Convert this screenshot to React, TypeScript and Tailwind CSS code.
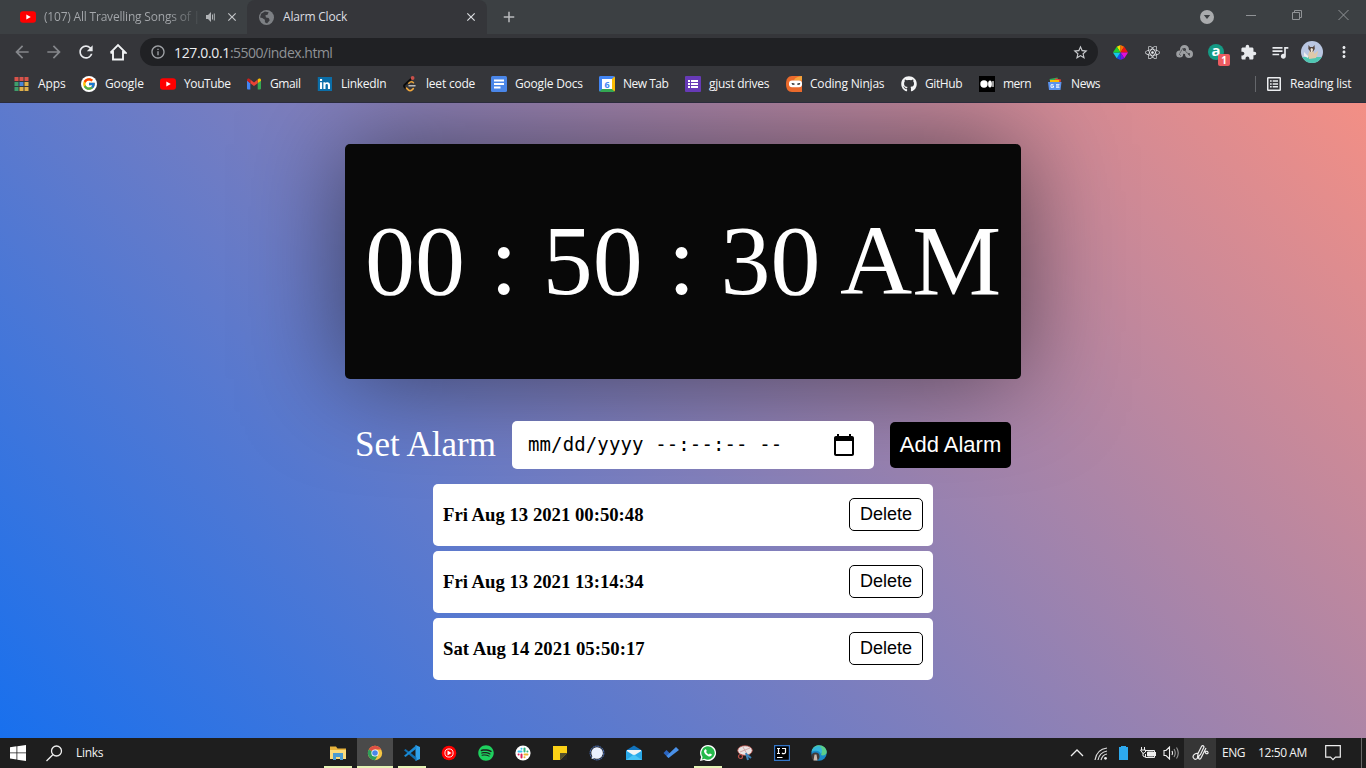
import type { ReactNode } from "react";
import { FcGoogle } from "react-icons/fc";
import { FaGithub, FaReact, FaSpotify } from "react-icons/fa";
import { MdExtension, MdQueueMusic, MdStarBorder, MdMoreVert, MdInfoOutline, MdRefresh, MdArrowBack, MdArrowForward, MdClose, MdAdd } from "react-icons/md";

function YouTube() {
  return (
    <svg width="16" height="16" viewBox="0 0 16 16">
      <rect x="0" y="2.2" width="16" height="11.6" rx="3" fill="#f00" />
      <path d="M6.3 5.4v5.2L10.8 8z" fill="#fff" />
    </svg>
  );
}

function Apps() {
  const colors = ["#d9534a", "#d9534a", "#d9534a", "#3f9d6c", "#4a86d8", "#e0b04a", "#3f9d6c", "#e0b04a", "#e0b04a"];
  return (
    <svg width="16" height="16" viewBox="0 0 16 16">
      {colors.map((c, i) => (
        <rect key={i} x={0.5 + (i % 3) * 5} y={1 + Math.floor(i / 3) * 5} width="4" height="4" fill={c} />
      ))}
    </svg>
  );
}

function GoogleBadge() {
  return (
    <span className="flex size-4 items-center justify-center rounded-full bg-white">
      <FcGoogle size={14} />
    </span>
  );
}

function Gmail() {
  return (
    <svg width="16" height="16" viewBox="0 0 16 16">
      <path d="M1 4v8.500c0 .5.4.9.9.9H4.300V7.200z" fill="#4285f4" />
      <path d="M15 4v8.500c0 .5-.4.9-.9.9h-2.400V7.200z" fill="#34a853" />
      <path d="M11.700 3.600v3.700L15 4.800V4c0-1.300-1.400-2-2.400-1.200z" fill="#fbbc04" />
      <path d="M4.300 7.300V3.600L8 6.400l3.700-2.800v3.700L8 10.100z" fill="#ea4335" />
      <path d="M1 4v.8l3.300 2.500V3.600l-.9-.8C2.400 2 1 2.700 1 4z" fill="#c5221f" />
    </svg>
  );
}

function LinkedIn() {
  return (
    <svg width="16" height="16" viewBox="0 0 16 16">
      <rect x="0.800" y="1" width="14.200" height="14" fill="#0b6ea8" />
      <path d="M3 6.300h2.100V13H3zM3 3h2.100v2H3zM6.400 6.300h2v1c1-1.700 4.600-1.600 4.600 1.700v4h-2.100V9.500c0-2-2.400-1.800-2.400 0V13H6.400z" fill="#fff" />
    </svg>
  );
}

function Leet() {
  return (
    <svg width="16" height="16" viewBox="0 0 16 16" fill="none" strokeLinecap="round">
      <path d="M9.500 2.500 2.500 9c-.7.7-.7 1.500 0 2.200l1.200 1.200" stroke="#0c0c0c" strokeWidth="1.800" />
      <path d="M11.500 6.700C9.800 5.200 8.400 5.600 6.800 7.200" stroke="#e9a33b" strokeWidth="1.500" />
      <path d="m4.500 12.200 1.800 1.700c1 1 2.700 1 3.700 0l1.300-1.300" stroke="#f0a63c" strokeWidth="1.700" />
      <path d="M7 9.700h6" stroke="#bbb" strokeWidth="1.500" />
      <circle cx="10.600" cy="2" r="1.900" fill="#c9504a" />
    </svg>
  );
}

function Docs() {
  return (
    <svg width="16" height="16" viewBox="0 0 16 16">
      <rect width="16" height="16" rx="1.500" fill="#4a86e8" />
      <path d="M3 3.500h10v2H3zM3 7h10v2H3zM3 10.500h6.500v2H3z" fill="#fff" />
    </svg>
  );
}

function Calendar() {
  return (
    <span className="flex size-4 items-center justify-center overflow-hidden rounded-[2px] border-[3px] border-t-[#4285f4] border-r-[#fbbc04] border-b-[#34a853] border-l-[#4285f4] bg-white text-[9px] leading-none font-bold text-[#4285f4]">
      6
    </span>
  );
}

function Forms() {
  return (
    <svg width="16" height="16" viewBox="0 0 16 16">
      <rect width="16" height="16" rx="1" fill="#673ab7" />
      <path d="M3 4h2v2H3zM6 4h7v2H6zM3 7h2v2H3zM6 7h7v2H6zM3 10h2v2H3zM6 10h7v2H6z" fill="#fff" />
    </svg>
  );
}

function Ninjas() {
  return (
    <svg width="16" height="16" viewBox="0 0 16 16">
      <path d="M6 0h10v16H6C2 16 0 13 0 8s2-8 6-8z" fill="#ea6a2c" />
      <path d="M16 0v4.500H8C8.500 2 12 .5 16 0z" fill="#f5a43c" />
      <rect x="3" y="4.500" width="13" height="6.800" rx="3" fill="#fff" />
      <path d="m5.500 7 3 .6v1.200H6.300zM14.300 7l-3 .6v1.200h2.200z" fill="#222" />
    </svg>
  );
}

function Medium() {
  return (
    <svg width="16" height="16" viewBox="0 0 16 16">
      <rect width="16" height="16" fill="#000" />
      <circle cx="5" cy="8" r="3.700" fill="#fff" />
      <ellipse cx="11" cy="8" rx="1.900" ry="3.500" fill="#fff" />
      <rect x="13.400" y="5" width="1.200" height="6" rx=".6" fill="#fff" />
    </svg>
  );
}

function News() {
  return (
    <svg width="16" height="16" viewBox="0 0 16 16">
      <path d="m2.500 3 8-1.500 1 4-8 2z" fill="#34a853" />
      <path d="m8 2.500 6 1-1 5-5-1z" fill="#ea4335" />
      <path d="M3 4h9v4H3z" fill="#fbbc04" />
      <path d="M1 6h13.500l-1 8H2z" fill="#5b93ee" />
      <path d="M6.500 8.700H4v2.600h2.500V10H5.400M9 8.700h3.500M9 10h3M9 11.300h3.500" stroke="#fff" fill="none" strokeWidth=".9" />
    </svg>
  );
}

const bookmarks: { label: string; icon: ReactNode; box: string; text: string }[] = [
  { label: "Apps", icon: <Apps />, box: "w-[67px]", text: "tracking-[-0.1px]" },
  { label: "Google", icon: <GoogleBadge />, box: "w-[79px]", text: "tracking-[-0.1px]" },
  { label: "YouTube", icon: <YouTube />, box: "w-[86px]", text: "tracking-[-0.4px]" },
  { label: "Gmail", icon: <Gmail />, box: "w-[71px]", text: "tracking-[-0.4px]" },
  { label: "LinkedIn", icon: <LinkedIn />, box: "w-[85px]", text: "tracking-[-0.3px]" },
  { label: "leet code", icon: <Leet />, box: "w-[89px]", text: "tracking-[-0.2px]" },
  { label: "Google Docs", icon: <Docs />, box: "w-[108px]", text: "tracking-[-0.2px]" },
  { label: "New Tab", icon: <Calendar />, box: "w-[86px]", text: "tracking-[-0.5px]" },
  { label: "gjust drives", icon: <Forms />, box: "w-[101px]", text: "tracking-[-0.3px]" },
  { label: "Coding Ninjas", icon: <Ninjas />, box: "w-[115px]", text: "tracking-[-0.2px]" },
  { label: "GitHub", icon: <FaGithub size={16} />, box: "w-[78px]", text: "tracking-[-0.4px]" },
  { label: "mern", icon: <Medium />, box: "w-[68px]", text: "tracking-[-0.5px]" },
  { label: "News", icon: <News />, box: "w-[60px]", text: "tracking-[-0.4px]" },
];

function TabStrip() {
  return (
    <div className="flex h-[34px] bg-[#3c4043] text-[12px]">
      <div className="flex w-[247px] shrink-0 items-center pl-5 text-[#a5a8ac]">
        <YouTube />
        <span className="ml-2 w-[155px] shrink-0 bg-gradient-to-r from-[#a5a8ac] from-80% to-[#4b4f52] bg-clip-text tracking-[-0.2px] whitespace-nowrap text-transparent">
          (107) All Travelling Songs of |
        </span>
        <svg className="ml-[6px] shrink-0" width="12" height="12" viewBox="0 0 12 12">
          <path d="M1 4h2l3-3v10L3 8H1z" fill="#b0b3b6" />
          <path d="M7.500 3.500v5M9.300 2.500v7" stroke="#b0b3b6" strokeWidth="1" />
        </svg>
        <MdClose className="ml-2 shrink-0 text-[#c4c6c9]" size={14} />
      </div>
      <div className="flex w-[240px] shrink-0 items-center rounded-t-lg bg-[#35363a] pl-3 text-[#dcdee1]">
        <svg width="15" height="15" viewBox="0 0 14 14">
          <circle cx="7" cy="7" r="7" fill="#7d8084" />
          <path d="M2 3.500 5.500 1.500 9 2 8 4.500 6 5l.5 2L9 7.500l1 2-2.500 3-2-1V9L3 7.500 1 7z" fill="#393a3e" />
        </svg>
        <span className="ml-[9px] w-[181px] tracking-[-0.2px]">Alarm Clock</span>
        <MdClose size={14} />
      </div>
      <div className="flex flex-1 items-center pl-[13px] text-[#b9bbbe]">
        <MdAdd size={18} />
        <div className="ml-auto mr-8 flex size-[14px] items-center justify-center rounded-full bg-[#a9abad]">
          <svg width="8" height="6" viewBox="0 0 8 6"><path d="M.8 1h6.400L4 5z" fill="#3c4043" /></svg>
        </div>
        <svg className="mr-[16px] mb-[5px]" width="104" height="12" viewBox="0 0 104 12" fill="none" stroke="#909396">
          <path d="M0 6.500h10" />
          <path d="M46.500 3.500h7v7h-7zM48.500 3V1.500h7v7H54" />
          <path d="m92.500 1 10 10m0-10-10 10" />
        </svg>
      </div>
    </div>
  );
}

const cell = "flex w-8 shrink-0 items-center justify-center";

function Toolbar() {
  return (
    <div className="flex h-9 items-center bg-[#35363a] text-[#e8eaed]">
      <div className="flex items-center pl-3">
        <MdArrowBack size={20} className="text-[#85878b]" />
        <MdArrowForward size={20} className="ml-3 text-[#85878b]" />
        <MdRefresh size={20} className="ml-3" />
        <svg className="ml-[13px]" width="18" height="18" viewBox="0 0 18 18" fill="none" stroke="#f1f3f4" strokeWidth="1.900">
          <path d="M4 8v8.500h10V8M1.500 9.700 9 2.200l7.500 7.500H14M4 9.700H1.500" />
        </svg>
      </div>
      <div className="ml-[13px] flex h-7 w-[958px] shrink-0 items-center rounded-full bg-[#202124] pl-[10px]">
        <MdInfoOutline size={16} className="text-[#a0a3a7]" />
        <span className="ml-2 text-[14px] tracking-[-0.5px] text-[#8f9296]">
          <span className="tracking-[-0.35px] text-[#eceef0]">127.0.0.1</span>:5500/index.html
        </span>
        <MdStarBorder size={17} className="mr-[9px] ml-auto text-[#c9cbce]" />
      </div>
      <div className="flex flex-1 items-center pl-[6px]">
        <span className={cell}>
          <svg width="17" height="17" viewBox="0 0 18 18">
            <path d="M9 9 5 3l4-2z" fill="#f0e000" /><path d="M9 9V1l4 2z" fill="#ff6b00" />
            <path d="m9 9 4-6 4 6z" fill="#f01414" /><path d="m9 9 8 0-4 6z" fill="#e010d8" />
            <path d="m9 9 4 6-4 2z" fill="#7014e8" /><path d="m9 9-4 6 4 2z" fill="#1450f0" />
            <path d="m9 9-8 0 4 6z" fill="#14c8e8" /><path d="M9 9H1l4-6z" fill="#20d030" />
          </svg>
        </span>
        <span className={cell}><FaReact size={15} /></span>
        <span className={cell}>
          <svg width="17" height="16" viewBox="0 0 17 16" fill="none" stroke="#9c9ea1">
            <g strokeWidth="3"><circle cx="8.500" cy="5.500" r="3" /><circle cx="3.700" cy="10" r="2" /><circle cx="13" cy="10" r="2.500" /></g>
            <path d="m4 9 3-5 4 5 3 1M3 10l2 2M12 10l2 2" stroke="#55575b" strokeWidth=".8" />
          </svg>
        </span>
        <span className={cell}>
          <span className="relative flex size-4 items-center justify-center rounded-full bg-[#159a84] text-[15px] leading-none font-bold text-white">
            <span className="-mt-[3px]">a</span>
            <span className="absolute top-[10px] left-[10px] flex h-3 w-3 items-center justify-center rounded-[2px] bg-[#ed5b60] text-[10px] leading-none">1</span>
          </span>
        </span>
        <span className={cell}><MdExtension size={17} /></span>
        <span className={cell}><MdQueueMusic size={20} /></span>
        <span className={cell}>
          <svg width="22" height="22" viewBox="0 0 22 22">
            <defs><clipPath id="avatar"><circle cx="11" cy="11" r="11" /></clipPath></defs>
            <g clipPath="url(#avatar)">
              <path d="M0 0h22v22H0z" fill="#bac7e2" />
              <path d="M0 16h22v6H0z" fill="#4fc7b2" />
              <path d="M8.500 10h4l1 3 3-3 .5 1-2 6-7 1-1-4z" fill="#dec9aa" />
              <path d="m7.500 4 1.500 2h3l1.500-2 .3 4-2 3h-2L7.300 8z" fill="#54463f" />
              <path d="m9.500 8 1.200-1L12 8l-.5 3h-1.400z" fill="#efe5d7" />
              <path d="m3 11 4 4v2l-4-2z" fill="#eee" />
            </g>
          </svg>
        </span>
        <span className={cell}><MdMoreVert size={18} /></span>
      </div>
    </div>
  );
}

function BookmarksBar() {
  return (
    <div className="flex h-[33px] items-center border-b border-[#2b2c3c] bg-[#35363a] pb-[4px] pl-[14px] text-[12px] text-[#f4f5f6]">
      {bookmarks.map((b) => (
        <div key={b.label} className={`flex shrink-0 items-center gap-2 whitespace-nowrap ${b.box}`}>
          <span className="flex size-4 shrink-0 items-center justify-center">{b.icon}</span>
          <span className={b.text}>{b.label}</span>
        </div>
      ))}
      <div className="mr-[14px] ml-auto flex items-center">
        <div className="h-4 w-px bg-[#65676b]" />
        <svg className="ml-[11px]" width="14" height="14" viewBox="0 0 14 14">
          <rect x=".75" y=".75" width="12.500" height="12.500" rx=".5" fill="none" stroke="#eceef0" strokeWidth="1.500" />
          <path d="M3 3.300h1.700v1.500H3zM3 6.200h1.700v1.500H3zM3 9.100h1.700v1.500H3zM5.700 3.300H11v1.500H5.700zM5.700 6.200H11v1.500H5.700zM5.700 9.100H11v1.500H5.700z" fill="#eceef0" />
        </svg>
        <span className="ml-[9px] w-[62px] tracking-[-0.25px] whitespace-nowrap">Reading list</span>
      </div>
    </div>
  );
}

const alarms = ["Fri Aug 13 2021 00:50:48", "Fri Aug 13 2021 13:14:34", "Sat Aug 14 2021 05:50:17"];

function AlarmPage() {
  return (
    <main className="flex h-[635px] flex-col items-center overflow-hidden bg-[linear-gradient(45deg,#1870ee,#f38f85)] pt-[41px] font-['Liberation_Serif',serif]">
      <div className="flex h-[235px] w-[676px] items-center justify-center rounded-[5px] bg-[#080808] text-[100px] leading-[115px] whitespace-nowrap text-white shadow-[0_0_100px_rgba(0,0,0,0.5)]">
        <span className="mb-[2px]">00 : 50 : 30 AM</span>
      </div>
      <div className="mt-[42px] flex h-12 w-[656px] items-center">
        <label className="mb-[2px] w-[157px] text-[35px] leading-none whitespace-nowrap text-white">Set Alarm</label>
        <div className="flex h-12 w-[362px] items-center rounded-[5px] bg-white pr-[18px] pl-4 text-black">
          <span className="mb-[2px] font-['DejaVu_Sans_Mono',monospace] text-[19px] tracking-[0.12px] whitespace-pre">mm/dd/yyyy --:--:-- --</span>
          <svg className="ml-auto" width="24" height="24" viewBox="0 0 24 24">
            <path d="M20 3h-1V1h-2v2H7V1H5v2H4c-1.100 0-2 .9-2 2v16c0 1.100.9 2 2 2h16c1.100 0 2-.9 2-2V5c0-1.100-.9-2-2-2zm0 18H4V8h16v13z" />
          </svg>
        </div>
        <button className="ml-4 h-[46px] w-[121px] rounded-[5px] bg-black pb-[2px] font-['Liberation_Sans',sans-serif] text-[22px] whitespace-nowrap text-white">Add Alarm</button>
      </div>
      <div className="mt-[15px] flex w-[500px] flex-col gap-[5px]">
        {alarms.map((a) => (
          <div key={a} className="flex h-[62px] items-center justify-between rounded-[5px] bg-white px-[10px] text-black">
            <h3 className="text-[18.72px] font-bold">{a}</h3>
            <button className="mb-[2px] h-[33px] w-[74px] rounded-[5px] border border-black font-['Liberation_Sans',sans-serif] text-[18px] leading-none">Delete</button>
          </div>
        ))}
      </div>
    </main>
  );
}

const taskIcons: { name: string; open?: boolean; active?: boolean; icon: ReactNode }[] = [
  {
    name: "files", open: true,
    icon: <><path d="M0 1.500h6l1.500 2H16V14H0z" fill="#e8b33c" /><path d="M0 5h16v9H0z" fill="#fbdb7a" /><path d="M3 8h10v7h-3v-3H6v3H3z" fill="#4b9bd0" /></>,
  },
  {
    name: "chrome", open: true, active: true,
    icon: <><circle cx="8" cy="8" r="7.200" fill="#f6c543" /><path d="M8 8 1.800 4.400a7.200 7.200 0 0 1 12.400 0H8z" fill="#dd5044" /><path d="M8 8 1.800 4.400A7.200 7.200 0 0 0 8 15.200l3.100-5.400z" fill="#2e9e5b" /><circle cx="8" cy="8" r="3.600" fill="#fff" /><circle cx="8" cy="8" r="2.800" fill="#4a86e8" /></>,
  },
  {
    name: "code", open: true,
    icon: <><path d="m11.500 0 4.500 2v12l-4.500 2z" fill="#2fa1ea" /><path d="M0 5.200 1.500 4 12.500 12.500V16z" fill="#1070b3" /><path d="M0 10.800 1.500 12 12.500 3.500V0z" fill="#1a8ad4" /></>,
  },
  {
    name: "music",
    icon: <><circle cx="8" cy="8" r="7.300" fill="#f00" /><circle cx="8" cy="8" r="4.100" fill="none" stroke="#fff" strokeWidth=".9" /><path d="m6.500 5.600 4 2.400-4 2.400z" fill="#fff" /></>,
  },
  { name: "spotify", icon: <FaSpotify size={16} color="#1ed05e" /> },
  {
    name: "slack",
    icon: <><circle cx="8" cy="8" r="7.600" fill="#fff" /><g fill="none" strokeWidth="2" strokeLinecap="round"><path d="M3.500 6.500h3" stroke="#36c5f0" /><path d="M9.500 3.500v3" stroke="#2eb67d" /><path d="M9.500 9.500h3" stroke="#ecb22e" /><path d="M6.500 9.500v3" stroke="#e01e5a" /></g><circle cx="6.500" cy="3.700" r="1" fill="#36c5f0" /><circle cx="12.400" cy="6.500" r="1" fill="#2eb67d" /><circle cx="9.500" cy="12.300" r="1" fill="#ecb22e" /><circle cx="3.600" cy="9.500" r="1" fill="#e01e5a" /></>,
  },
  { name: "notes", icon: <><path d="M1 1h14v14H1z" fill="#fcd116" /><path d="M8 8h7l-7 7z" fill="#55512d" /><path d="M15 8v7H8z" fill="#252525" /></> },
  { name: "signal", icon: <><circle cx="8" cy="8" r="6.900" fill="none" stroke="#5c8bea" strokeWidth=".8" strokeDasharray="2 .5" /><path d="M8 2.200a5.800 5.800 0 1 1-2.500 11L2.500 14l.8-2.800A5.800 5.800 0 0 1 8 2.200z" fill="#eaf1ff" /></> },
  { name: "mail", icon: <><path d="m0 5.500 8-5 8 5V15H0z" fill="#1273bd" /><path d="M1 5h14v5H1z" fill="#f1f4f5" /><path d="m0 5.500 8 5 8-5V15H0z" fill="#29a8e8" /><path d="m0 15 8-5.500 8 5.500z" fill="#47c3f5" /></> },
  { name: "todo", icon: <><path d="m.5 8 3-3L8.500 10l-3 3z" fill="#2b65c0" /><path d="m5.500 13-2-2 9.500-9 3 3z" fill="#4a91e8" /></> },
  {
    name: "whatsapp", open: true,
    icon: <><path d="M8 0a8 8 0 1 1-4 14.900L0 16l1.100-4A8 8 0 0 1 8 0z" fill="#fff" /><path d="M8 1.300a6.700 6.700 0 1 1-3.500 12.400l-2.600.7.700-2.500A6.700 6.700 0 0 1 8 1.300z" fill="#25b94a" /><path d="M5.300 4.300c.8-.5 1 .4 1.500 1.700l-.7 1c.7 1.300 1.600 2 2.800 2.500l.9-1c1 .4 2.200.7 2 1.200-.4 1.600-2 2-3.500 1.500-2.200-.8-4-2.700-4.300-4.600 0-1 .5-1.800 1.300-2.300z" fill="#fff" /></>,
  },
  { name: "snip", icon: <><ellipse cx="8" cy="5.500" rx="7.300" ry="4.800" fill="#e9e3e3" stroke="#b84c46" strokeWidth=".8" /><path d="m3 7 10-4M6 2l4 7" stroke="#c99" strokeWidth=".8" /><circle cx="3.500" cy="11.500" r="2" fill="none" stroke="#b84c46" strokeWidth="1.200" /><path d="m9 8 2 7M9 9l5 4" stroke="#3c82b8" strokeWidth="2" /></> },
  { name: "idea", icon: <><path d="M.6.6h14.800v14.800H.6z" fill="#000" stroke="#3476c8" strokeWidth="1.200" /><path d="M3 3.500h3M4.500 3.500v5M3 8.500h3M8 3.500h3.500v3.800c0 1.600-2.500 1.800-3.500.7M3 12.500h5.500" fill="none" stroke="#fff" strokeWidth="1.200" /></> },
  { name: "edge", icon: <><circle cx="8" cy="8" r="7.700" fill="#198ac9" /><path d="M.8 6C2 1.800 5 .2 8 .2c4.500 0 7.700 3.300 7.800 6.800 0 3-3.800 4-5.800 3 1.500-2.500-.5-5-4-5C3.500 5 1.800 5 .8 6z" fill="#5bcf8b" /><path d="M.5 7C1.500 3 4 1 8 1c3 1 4 5 2 8C9 6 5 4.500.5 7z" fill="#35b7dc" /><circle cx="4.500" cy="11.500" r="4" fill="#413b39" /><path d="M3.500 9.500h2l1 6h-4z" fill="#cabbb0" /></> },
];

function Taskbar() {
  return (
    <footer className="flex h-[30px] bg-[#1e1e1e] text-[12px] text-[#f2f2f2]">
      <div className="flex w-[319px] items-center pl-[10px]">
        <svg width="16" height="16" viewBox="0 0 16 16"><path d="M0 2.200 6.500 1.300v6.200H0zM7.300 1.200 16 0v7.500H7.300zM0 8.300h6.500v6.200L0 13.600zM7.300 8.300H16V16l-8.700-1.300z" fill="#fff" /></svg>
        <svg className="ml-5" width="17" height="17" viewBox="0 0 17 17" fill="none" stroke="#f0f0f0" strokeWidth="1.300"><circle cx="10.500" cy="6" r="5" /><path d="M6.800 9.700.5 16" /></svg>
        <span className="ml-[13px] tracking-[-0.3px]">Links</span>
      </div>
      {taskIcons.map((t) => (
        <div key={t.name} className="flex w-[37px] justify-center">
          <div className={`flex items-center justify-center border-b-2 ${t.active ? "w-9 bg-[#4a4a4a]" : "w-7"} ${t.open ? "border-[#e4f3b5]" : "border-transparent"}`}>
            <svg className="mt-[2px]" width="16" height="16" viewBox="0 0 16 16">{t.icon}</svg>
          </div>
        </div>
      ))}
      <div className="ml-auto flex items-center">
        <svg className="mr-[10px]" width="14" height="8" viewBox="0 0 14 8" fill="none" stroke="#eee" strokeWidth="1.300"><path d="m1 7 6-6 6 6" /></svg>
        <svg width="15" height="15" viewBox="0 0 15 15" fill="none" stroke="#ddd" strokeWidth="1.200"><path d="M1 14C2 7 6 3 13 2M4 14c.8-4.500 4-8 9-9M7 14c.8-3 3-5.500 6-6" /><circle cx="11.500" cy="12.300" r="1.400" fill="#eee" stroke="none" /></svg>
        <svg className="ml-[10px]" width="9" height="14" viewBox="0 0 9 14"><path d="M2 0h5v1h2v13H0V1h2z" fill="#2da9ee" /></svg>
        <svg className="ml-3" width="17" height="12" viewBox="0 0 17 12" fill="none" stroke="#eee"><path d="M6 3.500h8.500v7h-9V7" /><path d="M7.500 5h6v4h-6z" fill="#eee" /><path d="M15.500 5v4M1.500 0v3M4.500 0v3M.5 3h5v2L3 6.500zM3 6v3l2 1" /></svg>
        <svg className="ml-[6px]" width="17" height="14" viewBox="0 0 17 14" fill="none" stroke="#eee" strokeWidth="1.100"><path d="M1 4.500h2L6.500 1v12L3 9.500H1zM9 5q1 2 0 4" /><path d="M11 3q2.500 4 0 8M13.500 1.500q3.500 5.500 0 11" stroke="#999" /></svg>
        <div className="ml-[4px] flex h-[30px] w-8 items-center justify-center bg-[#363636]">
          <svg width="17" height="16" viewBox="0 0 17 16" fill="none" stroke="#eee" strokeWidth="1.200"><path d="M6 8.500C3 7.500 0 11 1.500 13c1.500 2.500 4.500 1 5.500-2M5.500 12.500l.5-4 3.500-7c1-1.500 3-.5 2.300 1L8.500 9.500zM9 13l5-10M9 13c-1 2-3 1-2-1M12 7c2-1.500 4.500-.5 4 1-.6 1.500-3 .5-2.500-1" /></svg>
        </div>
        <span className="ml-[6px] w-9 tracking-[-0.5px]">ENG</span>
        <span className="w-[67px] tracking-[-0.4px] whitespace-nowrap">12:50 AM</span>
        <svg width="16" height="16" viewBox="0 0 16 16" fill="none" stroke="#eee" strokeWidth="1.200"><path d="M.7.700h14.600v11.500h-4.800L8 14.700l-2.500-2.500H.7z" /></svg>
        <div className="ml-5 h-[30px] w-px bg-[#696969]" />
        <div className="w-1" />
      </div>
    </footer>
  );
}

export default function App() {
  return (
    <div className="flex h-[768px] w-[1366px] flex-col overflow-hidden font-['Open_Sans','Noto_Sans',sans-serif]">
      <TabStrip />
      <Toolbar />
      <BookmarksBar />
      <AlarmPage />
      <Taskbar />
    </div>
  );
}
